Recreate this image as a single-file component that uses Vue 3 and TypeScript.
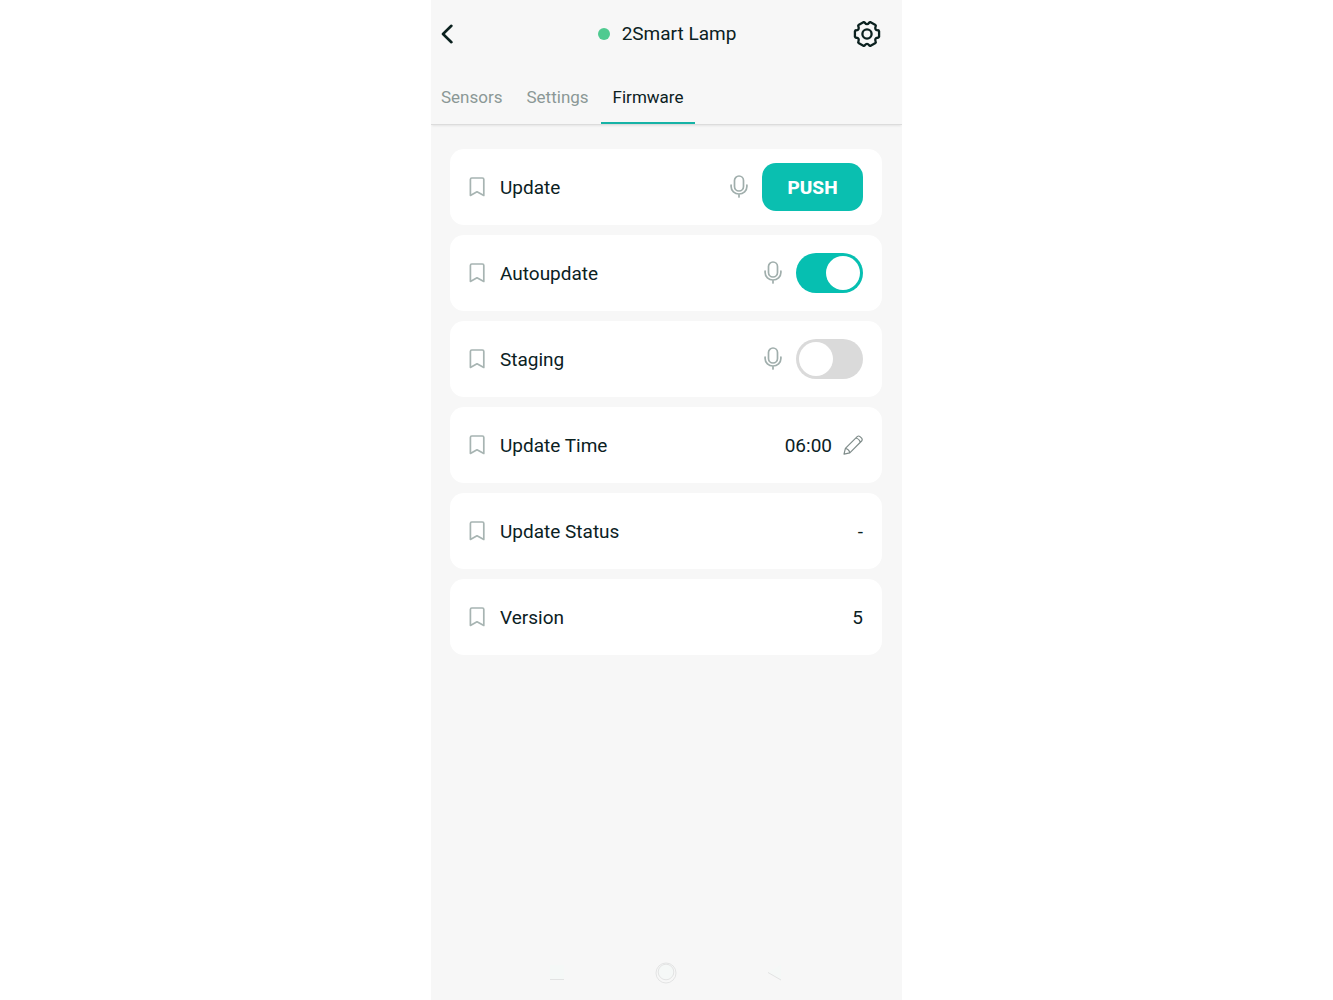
<script setup lang="ts">
import { ref } from 'vue'

type Kind = 'push' | 'toggle' | 'time' | 'value'
interface Row {
  id: string
  label: string
  kind: Kind
  value: string
  on: boolean
}

const tabs = ['Sensors', 'Settings', 'Firmware']
const active = ref('Firmware')

const rows = ref<Row[]>([
  { id: 'update', label: 'Update', kind: 'push', value: 'PUSH', on: false },
  { id: 'autoupdate', label: 'Autoupdate', kind: 'toggle', value: '', on: true },
  { id: 'staging', label: 'Staging', kind: 'toggle', value: '', on: false },
  { id: 'time', label: 'Update Time', kind: 'time', value: '06:00', on: false },
  { id: 'status', label: 'Update Status', kind: 'value', value: '-', on: false },
  { id: 'version', label: 'Version', kind: 'value', value: '5', on: false },
])

// Six-toothed gear outline around (14, 14)
function polar(deg: number, r: number): string {
  const a = (deg * Math.PI) / 180
  return `${(14 + r * Math.cos(a)).toFixed(2)} ${(14 + r * Math.sin(a)).toFixed(2)}`
}
function gear(): string {
  let d = `M${polar(-13, 12.4)}`
  for (let k = 0; k < 6; k++) {
    const t = k * 60
    d += `L${polar(t + 13, 12.4)}`
    d += `Q${polar(t + 18, 12.4)} ${polar(t + 19, 11.4)}`
    d += `Q${polar(t + 30, 8.4)} ${polar(t + 41, 11.4)}`
    d += `Q${polar(t + 42, 12.4)} ${polar(t + 47, 12.4)}`
  }
  return d + 'Z'
}
const gearPath = gear()
</script>

<template>
  <main class="phone">
    <header class="bar">
      <button class="back" type="button" aria-label="Back">
        <svg width="12" height="20" viewBox="0 0 12 20" fill="none" stroke="#0b211f" stroke-width="2.6" stroke-linecap="round" stroke-linejoin="round">
          <path d="M10.4 1.8 2 10l8.4 8.2" />
        </svg>
      </button>
      <h1 class="title"><span class="dot"></span>2Smart Lamp</h1>
      <button class="gear" type="button" aria-label="Device settings">
        <svg width="28" height="28" viewBox="0 0 28 28" fill="none" stroke="#0b211f" stroke-width="2.3" stroke-linejoin="round">
          <path :d="gearPath" />
          <circle cx="14" cy="14" r="4.6" />
        </svg>
      </button>
    </header>

    <nav class="tabs">
      <button
        v-for="t in tabs"
        :key="t"
        type="button"
        class="tab"
        :class="{ active: t === active }"
        @click="active = t"
      >{{ t }}</button>
    </nav>

    <section class="list">
      <div v-for="row in rows" :key="row.id" class="card">
        <svg class="mark" width="16" height="20" viewBox="0 0 16 20" fill="none" stroke="#a7b4b2" stroke-width="1.7" stroke-linejoin="round">
          <path d="M1.4 18.4V2.4Q1.4 1 2.8 1h10.6q1.4 0 1.4 1.4v16L8 14.8z" />
        </svg>
        <label class="label" :for="row.id">{{ row.label }}</label>
        <svg v-if="row.kind === 'push' || row.kind === 'toggle'" class="mic" width="18" height="24" viewBox="0 0 18 24" fill="none" stroke="#a0aeac" stroke-width="1.7" stroke-linecap="round">
          <rect x="4.5" y="1" width="9" height="15" rx="4.5" />
          <path d="M1.1 10v1.4a7.9 7.6 0 0 0 15.8 0V10M9 19.2v2.8" />
        </svg>
        <button v-if="row.kind === 'push'" :id="row.id" type="button" class="push">{{ row.value }}</button>
        <input v-else-if="row.kind === 'toggle'" :id="row.id" v-model="row.on" type="checkbox" role="switch" class="switch" />
        <template v-else>
          <output :id="row.id" class="value">{{ row.value }}</output>
          <button v-if="row.kind === 'time'" type="button" class="edit" aria-label="Edit update time">
            <svg width="20" height="20" viewBox="0 0 20 20" fill="none" stroke="#7f8c8a" stroke-width="1.2" stroke-linejoin="round">
              <path d="M1 19.2 2.4 13.4 14.2 1.6q1.4-1.2 2.8 0l1.6 1.6q1.2 1.4 0 2.8L6.8 17.8zM2.4 13.4q3.6.8 4.4 4.4M12.8 3q3.6.8 4.4 4.4" />
            </svg>
          </button>
        </template>
      </div>
    </section>

    <footer class="system">
      <svg width="20" height="24" viewBox="0 0 20 24" fill="none">
        <rect x="3" y="4" width="14" height="14" fill="#f5f8f7" />
        <path d="M3 18.5h14" stroke="#e2e3e3" />
      </svg>
      <svg width="24" height="24" viewBox="0 0 24 24" fill="none" stroke="#e3e4e4">
        <circle cx="12" cy="12" r="10" />
        <circle cx="12" cy="11" r="7.8" fill="#f5f8f7" />
      </svg>
      <svg width="20" height="24" viewBox="0 0 20 24" fill="none">
        <path d="M4 11 17 4v14z" fill="#f5f8f7" />
        <path d="M4 11.5 17 19" stroke="#e2e3e3" />
      </svg>
    </footer>
  </main>
</template>

<style>
body {
  margin: 0;
  background: #fff;
}
</style>

<style scoped>
.phone {
  box-sizing: border-box;
  display: flex;
  flex-direction: column;
  max-width: 471px;
  min-height: 100vh;
  margin: 0 auto;
  background: #f7f7f7;
  color: #0b211f;
  font-family: Roboto, "Liberation Sans", sans-serif;
  font-size: 19px;
  line-height: 24px;
}
button {
  padding: 0;
  border: 0;
  background: none;
  color: inherit;
  font: inherit;
  cursor: pointer;
}
svg {
  display: block;
  flex: none;
}
.bar {
  display: flex;
  align-items: center;
  justify-content: space-between;
  height: 67px;
  padding: 0 21px 0 10px;
}
.back {
  width: 40px;
}
.title {
  display: flex;
  align-items: center;
  gap: 12px;
  margin: 0;
  font-size: 19px;
  font-weight: 400;
}
.dot {
  width: 12px;
  height: 12px;
  border-radius: 50%;
  background: #4fca90;
}
.tabs {
  display: flex;
  height: 57px;
  border-bottom: 1px solid #dcdcdc;
  box-shadow: 0 2px 2px -1px rgba(0, 0, 0, 0.08);
}
.tab {
  padding: 4px 12px 0;
  border-bottom: 2px solid transparent;
  color: #8b9896;
  font-size: 17px;
}
.tab:first-child {
  padding-left: 10px;
}
.tab.active {
  border-bottom-color: #16b3a6;
  color: #0b211f;
}
.list {
  display: flex;
  flex-direction: column;
  gap: 10px;
  padding: 24px 20px 24px 19px;
}
.card {
  box-sizing: border-box;
  display: flex;
  align-items: center;
  min-height: 76px;
  padding: 14px 19px;
  border-radius: 14px;
  background: #fff;
}
.label {
  flex: 1;
  margin-left: 15px;
  padding-top: 2px;
}
.value {
  padding-top: 2px;
}
.mic {
  margin-right: 14px;
}
.push {
  width: 101px;
  height: 48px;
  padding-top: 2px;
  border-radius: 14px;
  background: #0abfb0;
  color: #fff;
  font-weight: 800;
}
.switch {
  appearance: none;
  box-sizing: border-box;
  width: 67px;
  height: 40px;
  margin: 0;
  padding: 3px;
  border-radius: 20px;
  background: #dadada;
  cursor: pointer;
}
.switch::before {
  content: "";
  display: block;
  width: 34px;
  height: 34px;
  border-radius: 50%;
  background: #fff;
}
.switch:checked {
  background: #06bfb1;
}
.switch:checked::before {
  margin-left: auto;
}
.edit {
  margin-left: 11px;
}
.system {
  display: flex;
  justify-content: space-between;
  margin-top: auto;
  padding: 0 118px 15px 116px;
}
</style>
